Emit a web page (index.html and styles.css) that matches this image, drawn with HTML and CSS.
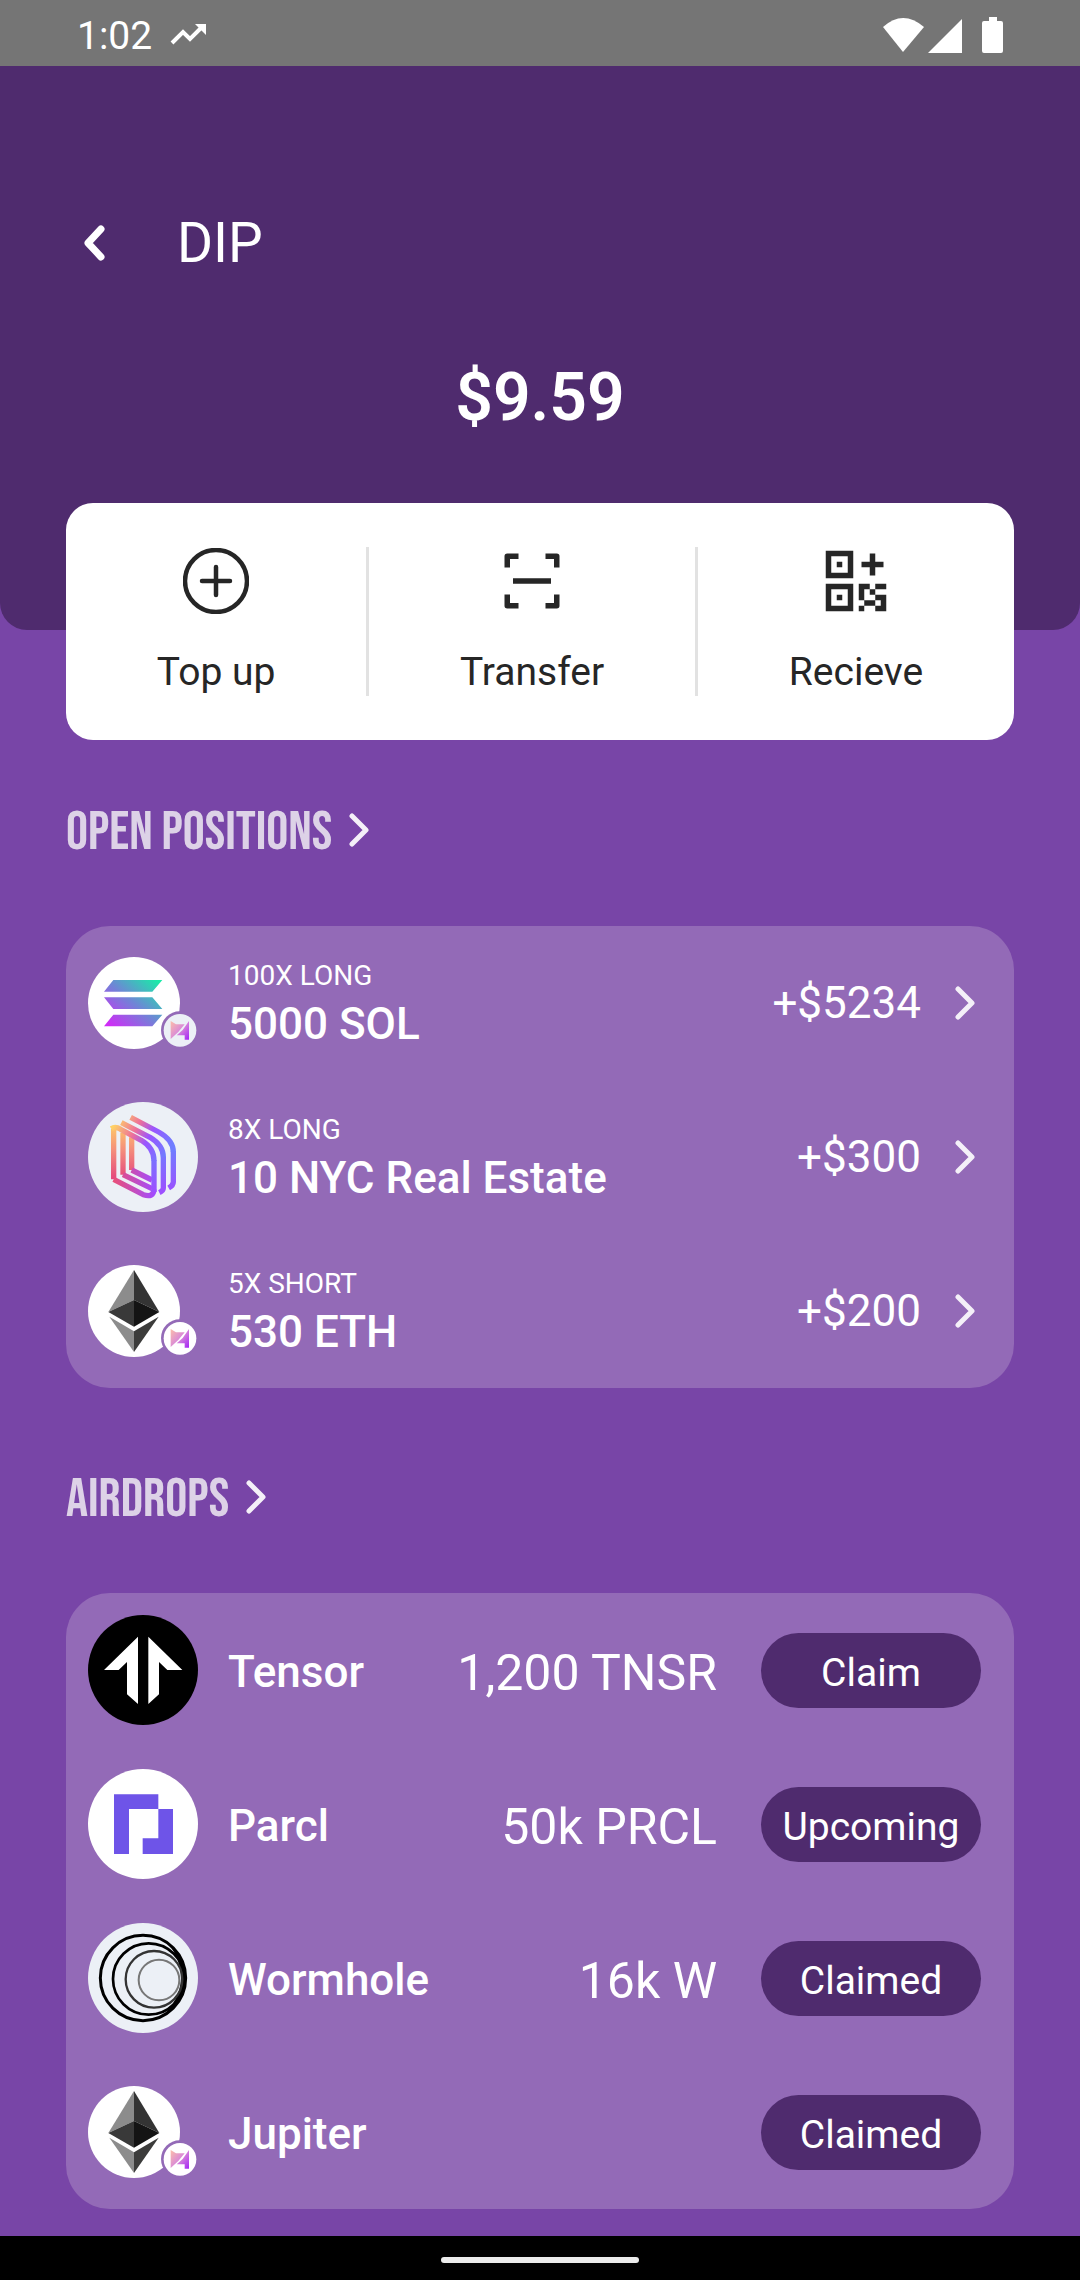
FILE: index.html
```html
<!DOCTYPE html>
<html lang="en">
<head>
<meta charset="utf-8">
<meta name="viewport" content="width=device-width, initial-scale=1">
<title>DIP</title>
<link rel="stylesheet" href="styles.css">
</head>
<body>
<svg class="defs" aria-hidden="true">
  <defs>
    <linearGradient id="sol" gradientUnits="userSpaceOnUse" x1="75" y1="240" x2="200" y2="90">
      <stop offset="0" stop-color="#cf2cf6"/><stop offset=".5" stop-color="#6f85d6"/><stop offset="1" stop-color="#19eba8"/>
    </linearGradient>
    <linearGradient id="badge-fill" gradientUnits="userSpaceOnUse" x1="248" y1="225" x2="303" y2="270">
      <stop offset="0" stop-color="#f9b9ae"/><stop offset=".5" stop-color="#d98ad8"/><stop offset="1" stop-color="#a92cf5"/>
    </linearGradient>
    <linearGradient id="estate-left" gradientUnits="userSpaceOnUse" x1="90" y1="60" x2="100" y2="240">
      <stop offset="0" stop-color="#ffd166"/><stop offset=".45" stop-color="#f5907a"/><stop offset="1" stop-color="#e23f7d"/>
    </linearGradient>
    <linearGradient id="estate-top" gradientUnits="userSpaceOnUse" x1="84" y1="60" x2="240" y2="150">
      <stop offset="0" stop-color="#ffd166"/><stop offset=".35" stop-color="#ec6f9a"/><stop offset=".6" stop-color="#9a55ff"/><stop offset="1" stop-color="#6f7dff"/>
    </linearGradient>
    <linearGradient id="estate-side" gradientUnits="userSpaceOnUse" x1="0" y1="140" x2="0" y2="285">
      <stop offset="0" stop-color="#6f7dff"/><stop offset="1" stop-color="#a24bff"/>
    </linearGradient>
    <linearGradient id="estate-base" gradientUnits="userSpaceOnUse" x1="78" y1="0" x2="200" y2="0">
      <stop offset="0" stop-color="#e8507a"/><stop offset="1" stop-color="#a24bff"/>
    </linearGradient>
    <symbol id="badge" viewBox="0 0 330 330">
      <path d="M248 219L264 229H290L271 252L248 273Z M303 219V275H290V262H266L284 246Z" fill="url(#badge-fill)"/>
    </symbol>
    <symbol id="eth" viewBox="0 0 330 330">
      <circle cx="138" cy="165" r="138" fill="#fff"/>
      <path d="M138 42L61 168L138 132Z" fill="#8c8c8c"/>
      <path d="M138 42L214 168L138 132Z" fill="#343434"/>
      <path d="M61 168L138 132V212Z" fill="#393939"/>
      <path d="M214 168L138 132V212Z" fill="#141414"/>
      <path d="M64 182L138 226V288Z" fill="#8c8c8c"/>
      <path d="M212 182L138 226V288Z" fill="#3c3c3b"/>
      <circle cx="275" cy="246" r="56" fill="#936ab7"/>
      <circle cx="276" cy="247" r="49" fill="#fff"/>
      <use href="#badge"/>
    </symbol>
    <symbol id="chevron" viewBox="0 0 20 34">
      <path d="M3 3L17 17L3 31" fill="none" stroke="currentColor" stroke-width="5" stroke-linecap="round" stroke-linejoin="round"/>
    </symbol>
  </defs>
</svg>

<div class="status-bar">
  <span class="status-time">1:02</span>
  <svg class="status-trend" viewBox="0 0 36 22" aria-hidden="true">
    <path d="M2 19L13 8L20 15L32 3" fill="none" stroke="currentColor" stroke-width="4"/><path d="M25 0H36V11Z" fill="currentColor"/>
  </svg>
  <svg class="status-signals" viewBox="0 0 120 36" aria-hidden="true" fill="currentColor">
    <path d="M0 10Q20 -8 41 10L20 35Z"/>
    <path d="M79 2V36H45Z"/>
    <path d="M106 0H114V4H118Q120 4 120 6V34Q120 36 118 36H101Q99 36 99 34V6Q99 4 101 4H106Z"/>
  </svg>
</div>

<header class="hero">
  <div class="title-row">
    <button class="back" type="button" aria-label="Back">
      <svg viewBox="0 0 22 36" aria-hidden="true"><path d="M18 4L5 18L18 32" fill="none" stroke="currentColor" stroke-width="7" stroke-linecap="round" stroke-linejoin="round"/></svg>
    </button>
    <h1 class="title">DIP</h1>
  </div>
  <p class="balance">$9.59</p>
</header>

<main class="content">
  <nav class="actions" aria-label="Wallet actions">
    <button class="action" type="button">
      <svg class="action-icon" viewBox="0 0 66 66" aria-hidden="true" fill="none" stroke="currentColor" stroke-width="4.500" stroke-linecap="round">
        <circle cx="33" cy="33" r="31"/><path d="M33 19V47M19 33H47"/>
      </svg>
      Top up
    </button>
    <span class="divider"></span>
    <button class="action" type="button">
      <svg class="action-icon" viewBox="0 0 66 66" aria-hidden="true" fill="none" stroke="currentColor" stroke-width="5.5" stroke-linejoin="round">
        <path d="M8.250 19.500V8.250H19.500M46.500 8.250H57.750V19.500M57.750 46.500V57.750H46.500M19.500 57.750H8.250V46.500M14 33H52"/>
      </svg>
      Transfer
    </button>
    <span class="divider"></span>
    <button class="action" type="button">
      <svg class="action-icon" viewBox="-.5 -.5 12 12" aria-hidden="true" fill="currentColor" fill-rule="evenodd">
        <path d="M0 0H5V5H0ZM1 1V4H4V1ZM2 2H3V3H2ZM0 6H5V11H0ZM1 7V10H4V7ZM2 8H3V9H2Z"/>
        <path d="M8 .5H9V2H10.500V3H9V4.500H8V3H6.500V2H8Z"/>
        <path d="M6 6H8V7H7V9H6ZM9 6H11V7H9ZM8 7H9V8H8ZM9 8H11V11H9V10H10V9H9ZM7 9H9V10H7ZM6 10H7V11H6Z"/>
      </svg>
      Recieve
    </button>
  </nav>

  <section class="positions">
    <h2 class="section-title"><a href="#positions"><span class="section-name">OPEN POSITIONS</span><svg class="chevron" aria-hidden="true"><use href="#chevron"/></svg></a></h2>
    <ul class="panel" id="positions">
      <li><a class="row" href="#sol-position">
        <svg class="token" viewBox="0 0 330 330" aria-hidden="true">
          <circle cx="138" cy="165" r="138" fill="#fff"/>
          <path d="M76 96H223L193 131H48ZM48 148H193L223 183H76ZM76 200H223L193 235H48Z" fill="url(#sol)"/>
          <circle cx="275" cy="246" r="56" fill="#936ab7"/><circle cx="276" cy="247" r="49" fill="#ecf0f6"/>
          <use href="#badge"/>
        </svg>
        <span class="holding"><span class="leverage">100X LONG</span><span class="name">5000 SOL</span></span>
        <span class="profit">+$5234</span>
        <svg class="chevron" aria-hidden="true"><use href="#chevron"/></svg>
      </a></li>
      <li><a class="row" href="#nyc-position">
        <svg class="token" viewBox="0 0 330 330" aria-hidden="true">
          <circle cx="165" cy="165" r="165" fill="#ecf0f6"/>
          <g fill="none" stroke-width="16" stroke-linejoin="round">
            <path d="M77 80V232M105 92V218M131 106V204" stroke="url(#estate-left)"/>
            <path d="M77 232L166 278Q197 288 198 262M105 218L192 260M131 204L192 234" stroke="url(#estate-base)"/>
            <path d="M70 80Q82 72 98 82L160 115Q198 138 198 176M100 62L186 106Q226 130 226 166M128 46L212 90Q256 114 256 150" stroke="url(#estate-top)"/>
            <path d="M198 174V270M226 164V258Q226 266 214 272M256 148V240Q256 250 242 258" stroke="url(#estate-side)"/>
          </g>
        </svg>
        <span class="holding"><span class="leverage">8X LONG</span><span class="name">10 NYC Real Estate</span></span>
        <span class="profit">+$300</span>
        <svg class="chevron" aria-hidden="true"><use href="#chevron"/></svg>
      </a></li>
      <li><a class="row" href="#eth-position">
        <svg class="token" aria-hidden="true"><use href="#eth"/></svg>
        <span class="holding"><span class="leverage">5X SHORT</span><span class="name">530 ETH</span></span>
        <span class="profit">+$200</span>
        <svg class="chevron" aria-hidden="true"><use href="#chevron"/></svg>
      </a></li>
    </ul>
  </section>

  <section class="airdrops">
    <h2 class="section-title"><a href="#airdrops"><span class="section-name">AIRDROPS</span><svg class="chevron" aria-hidden="true"><use href="#chevron"/></svg></a></h2>
    <ul class="panel" id="airdrops">
      <li class="row">
        <svg class="token" viewBox="0 0 330 330" aria-hidden="true">
          <circle cx="165" cy="165" r="165"/>
          <path d="M150 65L48 165H92L117 141V238L150 267ZM181 65L283 165H238L213 141V238L181 267Z" fill="#fff"/>
        </svg>
        <span class="holding name">Tensor</span>
        <span class="amount">1,200 TNSR</span>
        <button class="pill" type="button">Claim</button>
      </li>
      <li class="row">
        <svg class="token" viewBox="0 0 330 330" aria-hidden="true">
          <circle cx="165" cy="165" r="165" fill="#fff"/>
          <path d="M78 76H211V120H123V255H78ZM211 120H255V255H164V208H211Z" fill="#6e54e8"/>
        </svg>
        <span class="holding name">Parcl</span>
        <span class="amount">50k PRCL</span>
        <button class="pill" type="button">Upcoming</button>
      </li>
      <li class="row">
        <svg class="token" viewBox="0 0 330 330" aria-hidden="true">
          <circle cx="165" cy="165" r="165" fill="#ecf0f6"/>
          <path d="M240 62A130 130 0 0 1 222 280Q276 230 279 168Q278 104 240 62Z"/>
          <g fill="none" stroke="#000">
            <circle cx="165" cy="165" r="128" stroke-width="9"/>
            <circle cx="182" cy="168" r="107" stroke-width="8"/>
            <circle cx="198" cy="169" r="85" stroke-width="7" stroke="#333"/>
            <circle cx="213" cy="171" r="61" stroke-width="6" stroke="#777"/>
          </g>
        </svg>
        <span class="holding name">Wormhole</span>
        <span class="amount">16k W</span>
        <button class="pill" type="button">Claimed</button>
      </li>
      <li class="row">
        <svg class="token" aria-hidden="true"><use href="#eth"/></svg>
        <span class="holding name">Jupiter</span>
        <button class="pill" type="button">Claimed</button>
      </li>
    </ul>
  </section>
</main>

<div class="gesture-bar"><span class="gesture-handle"></span></div>
</body>
</html>
```

FILE: styles.css
```css
* {
  box-sizing: border-box;
}

body {
  margin: 0;
  min-height: 100vh;
  display: flex;
  flex-direction: column;
  background: #7845a7;
  color: #fff;
  font-family: Roboto, "Noto Sans", sans-serif;
  font-size: 39px;
}

h1, h2, p, ul {
  margin: 0;
  padding: 0;
}

ul {
  list-style: none;
}

a {
  color: inherit;
  text-decoration: none;
}

button {
  margin: 0;
  padding: 0;
  border: 0;
  background: none;
  color: inherit;
  font: inherit;
  cursor: pointer;
}

svg {
  display: block;
  flex: none;
}

.defs {
  position: absolute;
  width: 0;
  height: 0;
}

.status-bar {
  display: flex;
  align-items: center;
  height: 66px;
  padding: 4px 77px 0;
  background: #757575;
}

.status-time {
  padding-top: 2px;
  line-height: 44px;
}

.status-trend {
  width: 36px;
  height: 22px;
  margin-left: 18px;
}

.status-signals {
  width: 120px;
  height: 36px;
  margin-left: auto;
}

.hero {
  padding: 144px 66px 190px;
  border-radius: 0 0 27px 27px;
  background: #4f2b6e;
}

.title-row {
  display: flex;
  align-items: center;
  gap: 72px;
  padding-left: 17px;
}

.back svg {
  width: 22px;
  height: 36px;
}

.title {
  font-size: 55px;
  font-weight: 400;
  line-height: 66px;
}

.balance {
  margin-top: 80px;
  font-size: 66px;
  font-weight: 600;
  line-height: 84px;
  text-align: center;
}

.content {
  padding: 0 66px 27px;
}

.actions {
  display: flex;
  justify-content: space-evenly;
  margin-top: -127px;
  padding: 44px 0;
  border-radius: 27px;
  background: #fff;
  color: #262626;
}

.action {
  display: flex;
  flex-direction: column;
  align-items: center;
  gap: 35px;
  padding: 1px 0 0;
  line-height: 47px;
}

.action-icon {
  width: 66px;
  height: 66px;
}

.divider {
  width: 3px;
  background: #e2e2e2;
}

.section-title {
  color: #ddd2e7;
  font-family: "Bebas Neue", "Roboto Condensed", "Liberation Sans Narrow", Roboto, sans-serif;
  font-size: 55px;
  font-weight: 400;
  line-height: 38px;
}

.section-title a {
  display: inline-flex;
  align-items: center;
  gap: 17px;
  vertical-align: top;
}

.section-name {
  padding-top: 6px;
}

.chevron {
  width: 20px;
  height: 34px;
  color: #f4f0f8;
}

.positions {
  margin-top: 68px;
}

.airdrops {
  margin-top: 87px;
}

.panel {
  margin-top: 74px;
  border-radius: 44px;
  background: #936ab7;
}

.row {
  display: flex;
  align-items: center;
  padding: 22px 33px 22px 22px;
}

.row .chevron {
  margin: 0 6px 0 34px;
}

.token {
  width: 110px;
  height: 110px;
  margin-right: 30px;
}

.holding {
  display: flex;
  flex: 1;
  flex-direction: column;
  padding-top: 4px;
}

.leverage {
  font-size: 28px;
  line-height: 38px;
}

.name {
  font-size: 44px;
  font-weight: 500;
  line-height: 58px;
}

.profit {
  font-size: 44px;
  line-height: 56px;
}

.amount {
  padding-top: 6px;
  font-size: 50px;
  line-height: 60px;
}

.pill {
  width: 220px;
  height: 75px;
  margin-left: 44px;
  padding-top: 6px;
  border-radius: 38px;
  background: #4f2b6e;
}

.gesture-bar {
  display: flex;
  align-items: center;
  justify-content: center;
  height: 44px;
  margin-top: auto;
  padding-top: 4px;
  background: #000;
}

.gesture-handle {
  width: 198px;
  height: 6px;
  border-radius: 3px;
  background: #ececec;
}
```
